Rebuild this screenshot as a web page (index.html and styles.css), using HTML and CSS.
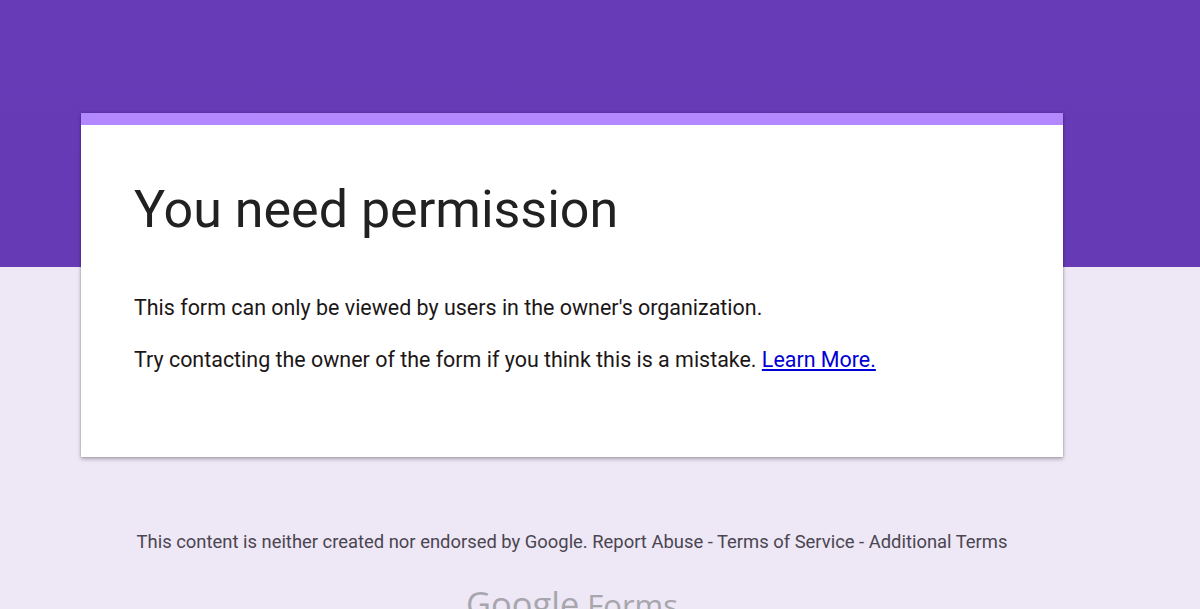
FILE: index.html
```html
<!DOCTYPE html>
<html lang="en">
<head>
<meta charset="utf-8">
<title>You need permission</title>
<link rel="stylesheet" href="styles.css">
</head>
<body>
<main class="page">
  <section class="card">
    <div class="accent"></div>
    <div class="card-body">
      <h1 class="title">You need permission</h1>
      <p class="msg">This form can only be viewed by users in the owner's organization.</p>
      <p class="msg">Try contacting the owner of the form if you think this is a mistake. <a class="link" href="#">Learn More.</a></p>
    </div>
  </section>
  <footer class="footer">
    <p class="disclaimer">This content is neither created nor endorsed by Google. Report Abuse - Terms of Service - Additional Terms</p>
    <div class="brand"><span class="brand-google">Google</span><span class="brand-forms">Forms</span></div>
  </footer>
</main>
</body>
</html>
```
FILE: styles.css
```css
html, body { margin: 0; height: 100%; overflow: hidden; }
body {
  background: linear-gradient(#673ab7 0, #663ab5 267px, #ede7f6 267px);
  font-family: Roboto, "Liberation Sans", sans-serif;
}
.page { width: 982px; margin-left: 81px; padding-top: 113px; }
.card {
  background: #fff;
  height: 344px;
  box-shadow: 0 2px 4px rgba(0,0,0,.28), 0 0 2px rgba(0,0,0,.2);
}
.accent { height: 12px; background: #b388ff; }
.card-body { padding: 55px 53px 0; }
.title {
  margin: 0 0 53px;
  font-size: 52px;
  line-height: 60px;
  font-weight: 400;
  color: #212121;
}
.msg {
  margin: 0 0 22px;
  font-size: 21.45px;
  line-height: 30px;
  color: #1c1717;
}
.link { color: #0000d6; }
.footer { text-align: center; padding-top: 73px; }
.disclaimer {
  margin: 0;
  font-size: 18.4px;
  line-height: 24px;
  color: #4a4550;
}
.brand {
  display: flex;
  justify-content: center;
  align-items: baseline;
  gap: 8px;
  margin-top: 30px;
  font-family: "Open Sans", sans-serif;
  line-height: 40px;
  color: #a8a6ad;
  white-space: nowrap;
}
.brand-google { font-size: 34.5px; }
.brand-forms { font-size: 31px; }
```
